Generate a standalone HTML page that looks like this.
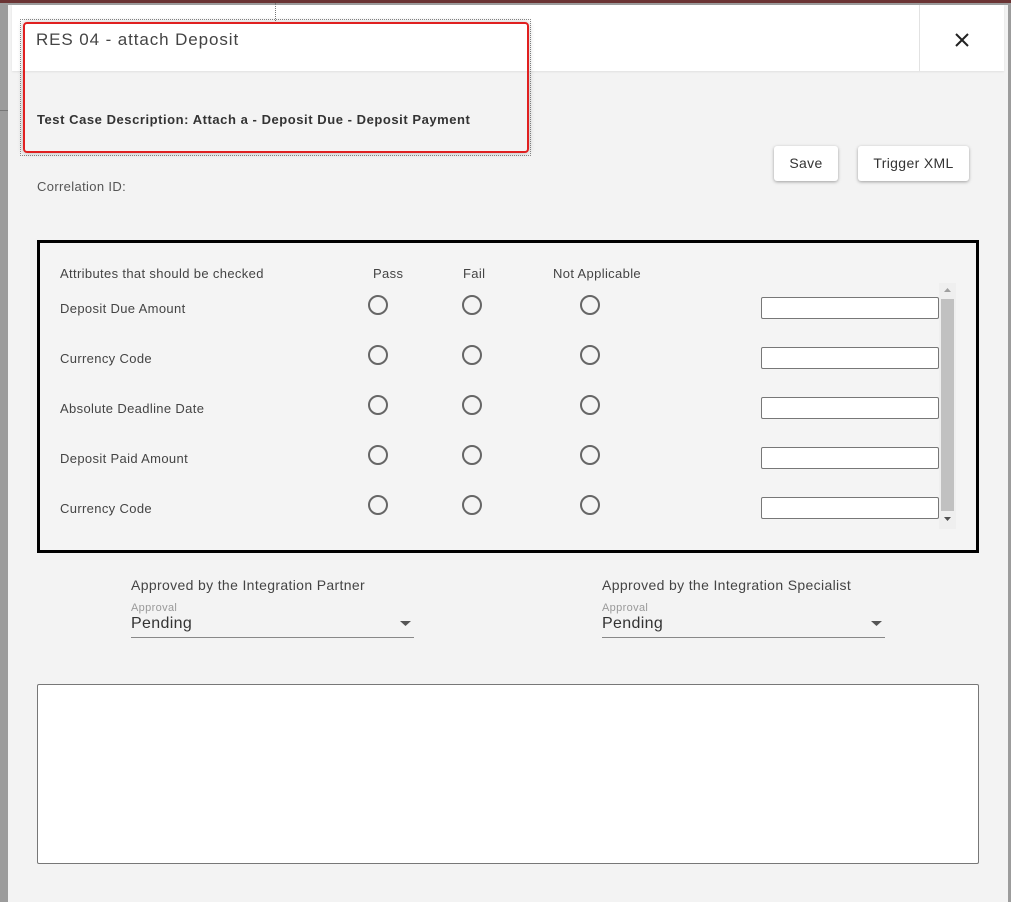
<!DOCTYPE html>
<html><head><meta charset="utf-8"><style>
*{margin:0;padding:0;box-sizing:border-box}
body{width:1011px;height:902px;overflow:hidden;background:#9c9c9c;font-family:"Liberation Sans",sans-serif;color:#444;position:relative;letter-spacing:0.35px}
.a{position:absolute;white-space:nowrap}
.modal{position:absolute;left:8px;top:5px;width:1000px;height:897px;background:#f3f3f3}
.hdr{position:absolute;left:12px;top:5px;width:992px;height:66px;background:#fff;box-shadow:0 1px 2px rgba(0,0,0,.08)}
.btn{position:absolute;background:#fff;border-radius:3px;box-shadow:0 1px 3px rgba(0,0,0,.35);font-size:14px;color:#333;text-align:center;line-height:35px;height:35px}
.r{position:absolute;width:20px;height:20px;border:2px solid #666;border-radius:50%}
.in{position:absolute;left:761px;width:178px;height:22px;background:#fff;border:1px solid #777;border-radius:2px}
.t13{font-size:13px}
</style></head><body>
<div class="a" style="left:0;top:0;width:1011px;height:3px;background:#6b3434"></div>
<div class="a" style="left:0;top:110px;width:8px;height:1px;background:#777"></div>
<div class="modal"></div>
<div class="hdr"></div>
<div class="a" style="left:919px;top:5px;width:1px;height:66px;background:#e2e2e2"></div>
<div class="a" style="left:275px;top:3px;width:0;height:18px;border-left:1px dotted #777"></div>
<svg class="a" style="left:954px;top:32px" width="16" height="16"><path d="M2 2L14 14M14 2L2 14" stroke="#222" stroke-width="2"/></svg>
<div class="a" style="left:20px;top:19px;width:511px;height:137px;border:1px dotted #888"></div>
<div class="a" style="left:23px;top:22px;width:506px;height:131px;border:2px solid #e02020;border-radius:4px;box-shadow:0 0 6px rgba(0,0,0,.25)"></div>
<div class="a" style="left:36px;top:30px;font-size:17px;color:#444;letter-spacing:0.9px">RES 04 - attach Deposit</div>
<div class="a" style="left:37px;top:112px;font-size:13px;font-weight:bold;color:#333;letter-spacing:0.55px">Test Case Description: Attach a - Deposit Due - Deposit Payment</div>
<div class="a t13" style="left:37px;top:179px;color:#555">Correlation ID:</div>
<div class="btn" style="left:774px;top:146px;width:64px">Save</div>
<div class="btn" style="left:858px;top:146px;width:111px">Trigger XML</div>
<div class="a" style="left:37px;top:240px;width:942px;height:313px;border:3px solid #000;background:#f4f4f4"></div>
<div class="a t13" style="left:60px;top:266px">Attributes that should be checked</div>
<div class="a t13" style="left:373px;top:266px">Pass</div>
<div class="a t13" style="left:463px;top:266px">Fail</div>
<div class="a t13" style="left:553px;top:266px">Not Applicable</div>
<div class="a t13" style="left:60px;top:301px">Deposit Due Amount</div>
<div class="a t13" style="left:60px;top:351px">Currency Code</div>
<div class="a t13" style="left:60px;top:401px">Absolute Deadline Date</div>
<div class="a t13" style="left:60px;top:451px">Deposit Paid Amount</div>
<div class="a t13" style="left:60px;top:501px">Currency Code</div>
<div class="r" style="left:368px;top:295px"></div><div class="r" style="left:462px;top:295px"></div><div class="r" style="left:580px;top:295px"></div>
<div class="r" style="left:368px;top:345px"></div><div class="r" style="left:462px;top:345px"></div><div class="r" style="left:580px;top:345px"></div>
<div class="r" style="left:368px;top:395px"></div><div class="r" style="left:462px;top:395px"></div><div class="r" style="left:580px;top:395px"></div>
<div class="r" style="left:368px;top:445px"></div><div class="r" style="left:462px;top:445px"></div><div class="r" style="left:580px;top:445px"></div>
<div class="r" style="left:368px;top:495px"></div><div class="r" style="left:462px;top:495px"></div><div class="r" style="left:580px;top:495px"></div>
<div class="in" style="top:297px"></div><div class="in" style="top:347px"></div><div class="in" style="top:397px"></div><div class="in" style="top:447px"></div><div class="in" style="top:497px"></div>
<div class="a" style="left:939px;top:283px;width:17px;height:246px;background:#efefef"></div>
<div class="a" style="left:941px;top:299px;width:13px;height:212px;background:#c1c1c1"></div>
<svg class="a" style="left:943px;top:287px" width="9" height="6"><path d="M1 5L4.5 1L8 5Z" fill="#a0a0a0"/></svg>
<svg class="a" style="left:943px;top:516px" width="9" height="6"><path d="M1 1L4.5 5L8 1Z" fill="#505050"/></svg>
<div class="a" style="left:131px;top:577px;font-size:14px">Approved by the Integration Partner</div>
<div class="a" style="left:131px;top:602px;font-size:11px;color:#999">Approval</div>
<div class="a" style="left:131px;top:615px;font-size:16px;color:#333">Pending</div>
<div class="a" style="left:131px;top:637px;width:283px;height:1px;background:#888"></div>
<svg class="a" style="left:400px;top:621px" width="11" height="6"><path d="M0 0L5.5 5L11 0Z" fill="#555"/></svg>
<div class="a" style="left:602px;top:577px;font-size:14px">Approved by the Integration Specialist</div>
<div class="a" style="left:602px;top:602px;font-size:11px;color:#999">Approval</div>
<div class="a" style="left:602px;top:615px;font-size:16px;color:#333">Pending</div>
<div class="a" style="left:602px;top:637px;width:283px;height:1px;background:#888"></div>
<svg class="a" style="left:871px;top:621px" width="11" height="6"><path d="M0 0L5.5 5L11 0Z" fill="#555"/></svg>
<div class="a" style="left:37px;top:684px;width:942px;height:180px;background:#fff;border:1px solid #777;border-radius:2px"></div>
</body></html>
